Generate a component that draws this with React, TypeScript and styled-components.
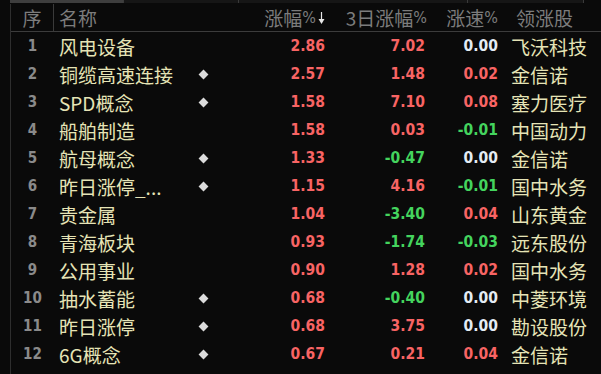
import React from "react";
import styled, { createGlobalStyle } from "styled-components";

const Global = createGlobalStyle`
  html, body { margin: 0; padding: 0; background: #0a0a0a; }
  body { width: 601px; height: 374px; overflow: hidden; }
`;

const Page = styled.div`
  width: 601px;
  height: 374px;
  background: #0a0a0a;
  display: flex;
  flex-direction: column;
`;

const TopStrip = styled.div`
  height: 4px;
  display: flex;
  padding-left: 10px;
`;

const StripSeg = styled.div<{ $w: number; $active?: boolean }>`
  width: ${(p) => p.$w}px;
  height: 3px;
  background: ${(p) => (p.$active ? "#3e3e3e" : "#161616")};
  border-right: 1px solid #3a3a3a;
`;

const Body = styled.div`
  margin-left: 10px;
  border-left: 1px solid #2e2e2e;
  flex: 1;
  display: flex;
  flex-direction: column;
`;

const cols = "43px 136px 26px 112px 100px 72px 1fr";

const HeaderRow = styled.div`
  display: grid;
  grid-template-columns: ${cols};
  height: 27px;
  align-items: center;
  border-bottom: 1px solid #3c3c3c;
  font-family: "Noto Sans CJK SC", sans-serif;
  font-size: 19px;
  color: #7c7c7c;
`;

const HCell = styled.div<{ $align?: string; $pr?: number; $pl?: number; $divider?: boolean }>`
  height: 100%;
  display: flex;
  align-items: center;
  justify-content: ${(p) => p.$align || "flex-start"};
  padding-right: ${(p) => p.$pr || 0}px;
  padding-left: ${(p) => p.$pl || 0}px;
  border-right: ${(p) => (p.$divider ? "1px solid #3a3a3a" : "none")};
  white-space: nowrap;
  line-height: 1;
`;

const Pct = styled.span`
  font-family: "DejaVu Sans Condensed", "DejaVu Sans", sans-serif;
  font-size: 16px;
`;

const Arrow = styled.svg`
  margin-left: 2px;
`;

const Row = styled.div`
  display: grid;
  grid-template-columns: ${cols};
  height: 28px;
  align-items: center;
`;

const Idx = styled.div`
  text-align: center;
  font-family: "DejaVu Sans Condensed", "DejaVu Sans", sans-serif;
  font-weight: bold;
  font-size: 15px;
  color: #8a8a8a;
`;

const Name = styled.div`
  padding-left: 5px;
  font-family: "Noto Sans CJK SC", sans-serif;
  font-size: 19px;
  color: #e6e4b6;
  white-space: nowrap;
  line-height: 1;
`;

const DiamondCell = styled.div`
  display: flex;
  justify-content: center;
`;

const Diamond = styled.div`
  width: 7px;
  height: 7px;
  background: #dcdcdc;
  transform: rotate(45deg);
`;

const Num = styled.div<{ $color: string; $pr: number }>`
  text-align: right;
  padding-right: ${(p) => p.$pr}px;
  font-family: "DejaVu Sans Condensed", "DejaVu Sans", sans-serif;
  font-weight: bold;
  font-size: 15.5px;
  color: ${(p) => p.$color};
`;

const Lead = styled(Name)`
  padding-left: 11px;
`;

const RED = "#f86464";
const GREEN = "#44d45e";
const WHITE = "#e4ecf4";

const colorOf = (v: string) => {
  const n = parseFloat(v);
  if (n > 0) return RED;
  if (n < 0) return GREEN;
  return WHITE;
};

const data: [string, boolean, string, string, string, string][] = [
  ["风电设备", false, "2.86", "7.02", "0.00", "飞沃科技"],
  ["铜缆高速连接", true, "2.57", "1.48", "0.02", "金信诺"],
  ["SPD概念", true, "1.58", "7.10", "0.08", "塞力医疗"],
  ["船舶制造", false, "1.58", "0.03", "-0.01", "中国动力"],
  ["航母概念", true, "1.33", "-0.47", "0.00", "金信诺"],
  ["昨日涨停_...", true, "1.15", "4.16", "-0.01", "国中水务"],
  ["贵金属", false, "1.04", "-3.40", "0.04", "山东黄金"],
  ["青海板块", false, "0.93", "-1.74", "-0.03", "远东股份"],
  ["公用事业", false, "0.90", "1.28", "0.02", "国中水务"],
  ["抽水蓄能", true, "0.68", "-0.40", "0.00", "中菱环境"],
  ["昨日涨停", true, "0.68", "3.75", "0.00", "勘设股份"],
  ["6G概念", true, "0.67", "0.21", "0.04", "金信诺"],
];

export default function App() {
  return (
    <Page>
      <Global />
      <TopStrip>
        <StripSeg $w={113} $active />
        <StripSeg $w={114} />
        <StripSeg $w={228} />
        <StripSeg $w={115} />
      </TopStrip>
      <Body>
        <HeaderRow>
          <HCell $align="center" $divider>序</HCell>
          <HCell $pl={5}>名称</HCell>
          <HCell />
          <HCell $align="flex-end" $pr={3}>
            涨幅<Pct>%</Pct>
            <Arrow width="7" height="14" viewBox="0 0 7 14">
              <line x1="3.5" y1="1" x2="3.5" y2="11" stroke="#e8e8e8" strokeWidth="1.2" />
              <path d="M0.5 8 L3.5 13 L6.5 8 Z" fill="#e8e8e8" />
            </Arrow>
          </HCell>
          <HCell $align="flex-end" $pr={1}>
            3日涨幅<Pct>%</Pct>
          </HCell>
          <HCell $align="flex-end" $pr={2}>
            涨速<Pct>%</Pct>
          </HCell>
          <HCell $pl={16}>领涨股</HCell>
        </HeaderRow>
        {data.map(([name, dia, a, b, c, lead], i) => (
          <Row key={i}>
            <Idx>{i + 1}</Idx>
            <Name>{name}</Name>
            <DiamondCell>{dia && <Diamond />}</DiamondCell>
            <Num $color={colorOf(a)} $pr={3}>{a}</Num>
            <Num $color={colorOf(b)} $pr={3}>{b}</Num>
            <Num $color={colorOf(c)} $pr={2}>{c}</Num>
            <Lead>{lead}</Lead>
          </Row>
        ))}
      </Body>
    </Page>
  );
}
